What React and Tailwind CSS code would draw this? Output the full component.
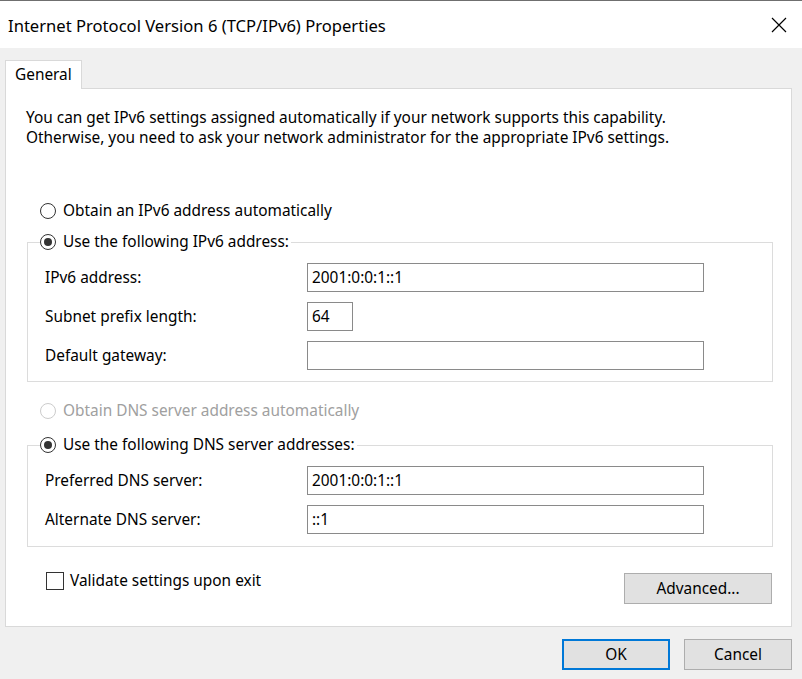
import { useState } from 'react';

const Radio = ({ checked, disabled }) => (
  <span
    className={`flex h-[16px] w-[16px] shrink-0 items-center justify-center rounded-full border bg-white ${
      disabled ? 'border-[#cccccc]' : 'border-[#333333]'
    }`}
  >
    {checked && <span className="h-[8px] w-[8px] rounded-full bg-[#333333]" />}
  </span>
);

const RadioLabel = ({ checked, disabled, children }) => (
  <span className="flex h-[20px] items-center gap-[7px]">
    <Radio checked={checked} disabled={disabled} />
    <span className={disabled ? 'text-[#a0a0a0]' : 'text-black'}>{children}</span>
  </span>
);

const Field = ({ label, value, narrow }) => (
  <div className="flex items-center">
    <span className="w-[262px] shrink-0">{label}</span>
    <div
      className={`flex h-[29px] items-center border border-[#8a8a8a] bg-white px-[4px] ${
        narrow ? 'w-[46px]' : 'w-[397px]'
      }`}
    >
      {value}
    </div>
  </div>
);

const Button = ({ children, primary, className = '' }) => (
  <button
    className={`flex h-[31px] items-center justify-center bg-[#e1e1e1] ${
      primary ? 'border-2 border-[#0078d7]' : 'border border-[#adadad]'
    } ${className}`}
  >
    {children}
  </button>
);

export default function App() {
  const [validate] = useState(false);

  return (
    <div className="flex h-[679px] w-[802px] flex-col bg-[#f0f0f0] text-[15.4px] leading-[20px] text-black [font-family:'Noto_Sans',Arial,sans-serif]">
      <div className="flex h-[48px] items-center justify-between border-t border-[#6f6f6f] bg-white pl-[8px] pr-[15px]">
        <span className="mt-[2px] text-[16.6px]">Internet Protocol Version 6 (TCP/IPv6) Properties</span>
        <svg width="16" height="16" viewBox="0 0 16 16">
          <path d="M1 1L15 15M15 1L1 15" stroke="#000" strokeWidth="1.2" />
        </svg>
      </div>

      <div className="pl-[5px] pr-[10px] pt-[12px]">
        <div className="relative z-10 flex h-[29px] w-[77px] items-center border border-b-0 border-[#d9d9d9] bg-white pl-[9px]">
          General
        </div>
        <div className="-mt-px flex h-[539px] flex-col border border-[#d9d9d9] bg-white pl-[20px] pr-[18px] pt-[19px]">
          <p>
            You can get IPv6 settings assigned automatically if your network supports this capability.
            <br />
            Otherwise, you need to ask your network administrator for the appropriate IPv6 settings.
          </p>

          <div className="mt-[53px] pl-[14px]">
            <RadioLabel>Obtain an IPv6 address automatically</RadioLabel>
          </div>

          <fieldset className="ml-px mt-[11px] border border-[#dcdcdc] pb-[11px] pl-[17px]">
            <legend className="-ml-[5px] pr-[2px]">
              <RadioLabel checked>Use the following IPv6 address:</RadioLabel>
            </legend>
            <div className="mt-[11px] flex flex-col gap-[10px]">
              <Field label="IPv6 address:" value="2001:0:0:1::1" />
              <Field label="Subnet prefix length:" value="64" narrow />
              <Field label="Default gateway:" value="" />
            </div>
          </fieldset>

          <div className="mt-[19px] pl-[14px]">
            <RadioLabel disabled>Obtain DNS server address automatically</RadioLabel>
          </div>

          <fieldset className="ml-px mt-[14px] border border-[#dcdcdc] pb-[12px] pl-[17px]">
            <legend className="-ml-[5px] pr-[2px]">
              <RadioLabel checked>Use the following DNS server addresses:</RadioLabel>
            </legend>
            <div className="mt-[11px] flex flex-col gap-[10px]">
              <Field label="Preferred DNS server:" value="2001:0:0:1::1" />
              <Field label="Alternate DNS server:" value="::1" />
            </div>
          </fieldset>

          <div className="mt-[24px] flex items-start justify-between">
            <span className="ml-[20px] flex items-center gap-[6px]">
              <span className="h-[18px] w-[18px] border border-[#333333] bg-white">{validate && '✓'}</span>
              Validate settings upon exit
            </span>
            <Button className="mr-px mt-[2px] w-[148px]">Advanced...</Button>
          </div>
        </div>
      </div>

      <div className="flex justify-end gap-[14px] pr-[10px] pt-[12px]">
        <Button primary className="w-[108px]">OK</Button>
        <Button className="w-[108px]">Cancel</Button>
      </div>
    </div>
  );
}
